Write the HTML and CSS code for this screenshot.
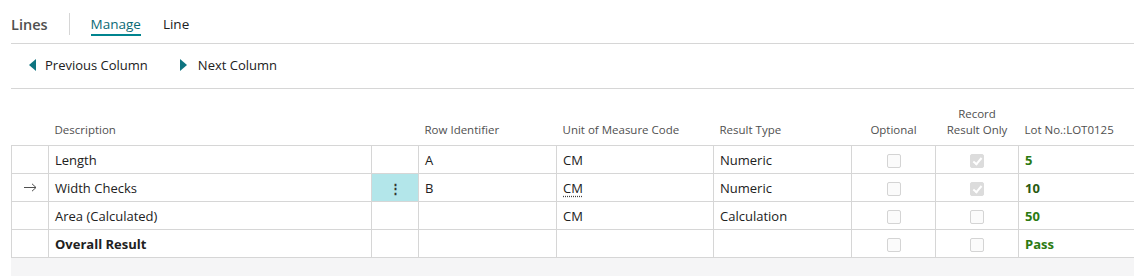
FILE: index.html
```html
<!DOCTYPE html>
<html lang="en">
<head>
    <meta charset="UTF-8">
    <title>Lines</title>
    <link rel="stylesheet" href="styles.css">
</head>
<body>
    <div class="part">
        <div class="tabs">
            <span class="part-title">Lines</span>
            <span class="tab-sep"></span>
            <span class="tab active">Manage</span>
            <span class="tab">Line</span>
        </div>

        <div class="toolbar">
            <span class="action"><span class="tri tri-left"></span>Previous Column</span>
            <span class="action"><span class="tri tri-right"></span>Next Column</span>
        </div>

        <div class="grid-wrap">
            <table class="grid">
                <colgroup>
                    <col style="width:37px">
                    <col style="width:323px">
                    <col style="width:47px">
                    <col style="width:138px">
                    <col style="width:157px">
                    <col style="width:138px">
                    <col style="width:84px">
                    <col style="width:83px">
                    <col style="width:140px">
                </colgroup>
                <thead>
                    <tr>
                        <th></th>
                        <th>Description</th>
                        <th></th>
                        <th>Row Identifier</th>
                        <th>Unit of Measure Code</th>
                        <th>Result Type</th>
                        <th class="center">Optional</th>
                        <th class="center">Record<br>Result Only</th>
                        <th>Lot No.:LOT0125</th>
                    </tr>
                </thead>
                <tbody>
                    <tr>
                        <td></td>
                        <td>Length</td>
                        <td></td>
                        <td>A</td>
                        <td>CM</td>
                        <td>Numeric</td>
                        <td class="center"><span class="check"></span></td>
                        <td class="center"><span class="check checked"></span></td>
                        <td class="value">5</td>
                    </tr>
                    <tr class="current">
                        <td class="marker">
                            <svg width="13" height="9" viewBox="0 0 13 9"><path d="M0 4.5H12M8 0.8L12 4.5L8 8.2" fill="none" stroke="#505050" stroke-width="1"/></svg>
                        </td>
                        <td>Width Checks</td>
                        <td class="dots-cell"><span class="dots">&#8942;</span></td>
                        <td>B</td>
                        <td><span class="lookup">CM</span></td>
                        <td>Numeric</td>
                        <td class="center"><span class="check"></span></td>
                        <td class="center"><span class="check checked"></span></td>
                        <td class="value dark">10</td>
                    </tr>
                    <tr>
                        <td></td>
                        <td>Area (Calculated)</td>
                        <td></td>
                        <td></td>
                        <td>CM</td>
                        <td>Calculation</td>
                        <td class="center"><span class="check"></span></td>
                        <td class="center"><span class="check"></span></td>
                        <td class="value">50</td>
                    </tr>
                    <tr>
                        <td></td>
                        <td class="bold">Overall Result</td>
                        <td></td>
                        <td></td>
                        <td></td>
                        <td></td>
                        <td class="center"><span class="check"></span></td>
                        <td class="center"><span class="check"></span></td>
                        <td class="value">Pass</td>
                    </tr>
                </tbody>
            </table>
            <div class="grid-footer"></div>
        </div>
    </div>
</body>
</html>
```

FILE: styles.css
```css
body {
    margin: 0;
    font-family: "Open Sans", "Noto Sans", sans-serif;
    font-size: 13px;
    color: #212121;
    background: #fff;
    overflow: hidden;
}

.part {
    padding-left: 11px;
}

.tabs {
    display: flex;
    align-items: center;
    height: 44px;
    border-bottom: 1px solid #d6d6d6;
    box-sizing: border-box;
    padding-top: 5px;
}

.part-title {
    font-size: 14.5px;
    font-weight: 600;
    color: #505050;
}

.tab-sep {
    width: 1px;
    height: 22px;
    background: #d6d6d6;
    margin: 0 21px 0 21px;
}

.tab {
    font-size: 13.5px;
    margin-right: 22px;
    line-height: 20px;
    border-bottom: 2px solid transparent;
    padding-top: 2px;
}

.tab.active {
    color: #0b6a75;
    border-bottom-color: #00848f;
}

.toolbar {
    display: flex;
    align-items: center;
    height: 45px;
    border-bottom: 1px solid #d6d6d6;
    padding-left: 18px;
    box-sizing: border-box;
    padding-bottom: 2px;
}

.action {
    display: flex;
    align-items: center;
    margin-right: 32px;
}

.tri {
    width: 0;
    height: 0;
    border-top: 6px solid transparent;
    border-bottom: 6px solid transparent;
    margin-right: 9px;
}

.tri-left {
    border-right: 7px solid #0e7480;
}

.tri-right {
    border-left: 7px solid #0e7480;
    margin-right: 11px;
}

.grid-wrap {
    margin-top: 12px;
    width: 1200px;
}

.grid {
    border-collapse: collapse;
    table-layout: fixed;
}

.grid th {
    font-weight: normal;
    font-size: 11.5px;
    color: #505050;
    text-align: left;
    vertical-align: bottom;
    padding: 0 6px 7px;
    height: 37px;
    line-height: 16px;
}

.grid td {
    height: 27px;
    padding: 0 6px;
    border: 1px solid #d6d6d6;
    white-space: nowrap;
}

.center {
    text-align: center;
}

.grid th.center {
    text-align: center;
}

.grid td.marker {
    text-align: center;
    padding: 0;
    line-height: 0;
}

.dots-cell {
    background: #b3e6ea;
    text-align: center;
}

.dots {
    font-weight: bold;
    color: #333;
}

.lookup {
    text-decoration: underline dotted #444;
    text-underline-offset: 3px;
}

.check {
    display: inline-block;
    width: 12px;
    height: 12px;
    border: 1px solid #d4d4d4;
    border-radius: 2px;
    vertical-align: middle;
    background: #fbfbfb;
    position: relative;
}

.check.checked {
    background: #dcdcdc;
    border-color: #dcdcdc;
}

.check.checked::after {
    content: "";
    position: absolute;
    left: 4px;
    top: 1px;
    width: 3px;
    height: 7px;
    border: solid #fff;
    border-width: 0 2px 2px 0;
    transform: rotate(40deg);
}

.value {
    font-weight: bold;
    color: #2c7a12;
}

.value.dark {
    color: #2a5a10;
}

.bold {
    font-weight: bold;
}

.grid-footer {
    height: 20px;
    background: #f5f5f6;
}
```
